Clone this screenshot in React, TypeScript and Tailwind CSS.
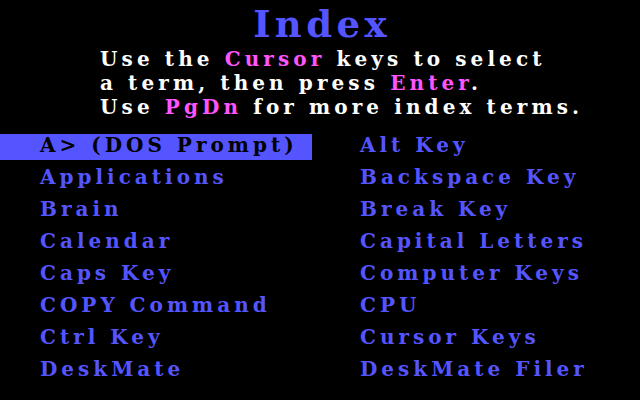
import React from "react";

const left = [
  "A> (DOS Prompt)",
  "Applications",
  "Brain",
  "Calendar",
  "Caps Key",
  "COPY Command",
  "Ctrl Key",
  "DeskMate",
];
const right = [
  "Alt Key",
  "Backspace Key",
  "Break Key",
  "Capital Letters",
  "Computer Keys",
  "CPU",
  "Cursor Keys",
  "DeskMate Filer",
];

export default function App() {
  return (
    <div className="w-[640px] h-[400px] bg-black overflow-hidden font-['DejaVu_Serif',serif] font-bold whitespace-pre">
      <div className="pt-[4px] pl-[4px] text-center text-[37px] leading-[40px] tracking-[4.4px] text-[#5555ff]">
        Index
      </div>
      <div className="mt-[3px] pl-[100px] text-[20px] leading-[24px] tracking-[4.1px] text-white">
        <div>
          Use the <span className="text-[#ff55ff]">Cursor</span> keys to select
        </div>
        <div>
          a term, then press <span className="text-[#ff55ff]">Enter</span>.
        </div>
        <div>
          Use <span className="text-[#ff55ff]">PgDn</span> for more index terms.
        </div>
      </div>
      <div className="mt-[15px] grid grid-cols-[312px_1fr] text-[20px] leading-[22px] tracking-[4px] text-[#5555ff]">
        <div className="flex flex-col gap-[6px]">
          {left.map((t, i) => (
            <div
              key={t}
              className={
                i === 0
                  ? "h-[26px] pl-[40px] bg-[#5555ff] text-black"
                  : "h-[26px] pl-[40px]"
              }
            >
              {t}
            </div>
          ))}
        </div>
        <div className="flex flex-col gap-[6px] pl-[48px]">
          {right.map((t) => (
            <div key={t} className="h-[26px]">
              {t}
            </div>
          ))}
        </div>
      </div>
    </div>
  );
}
